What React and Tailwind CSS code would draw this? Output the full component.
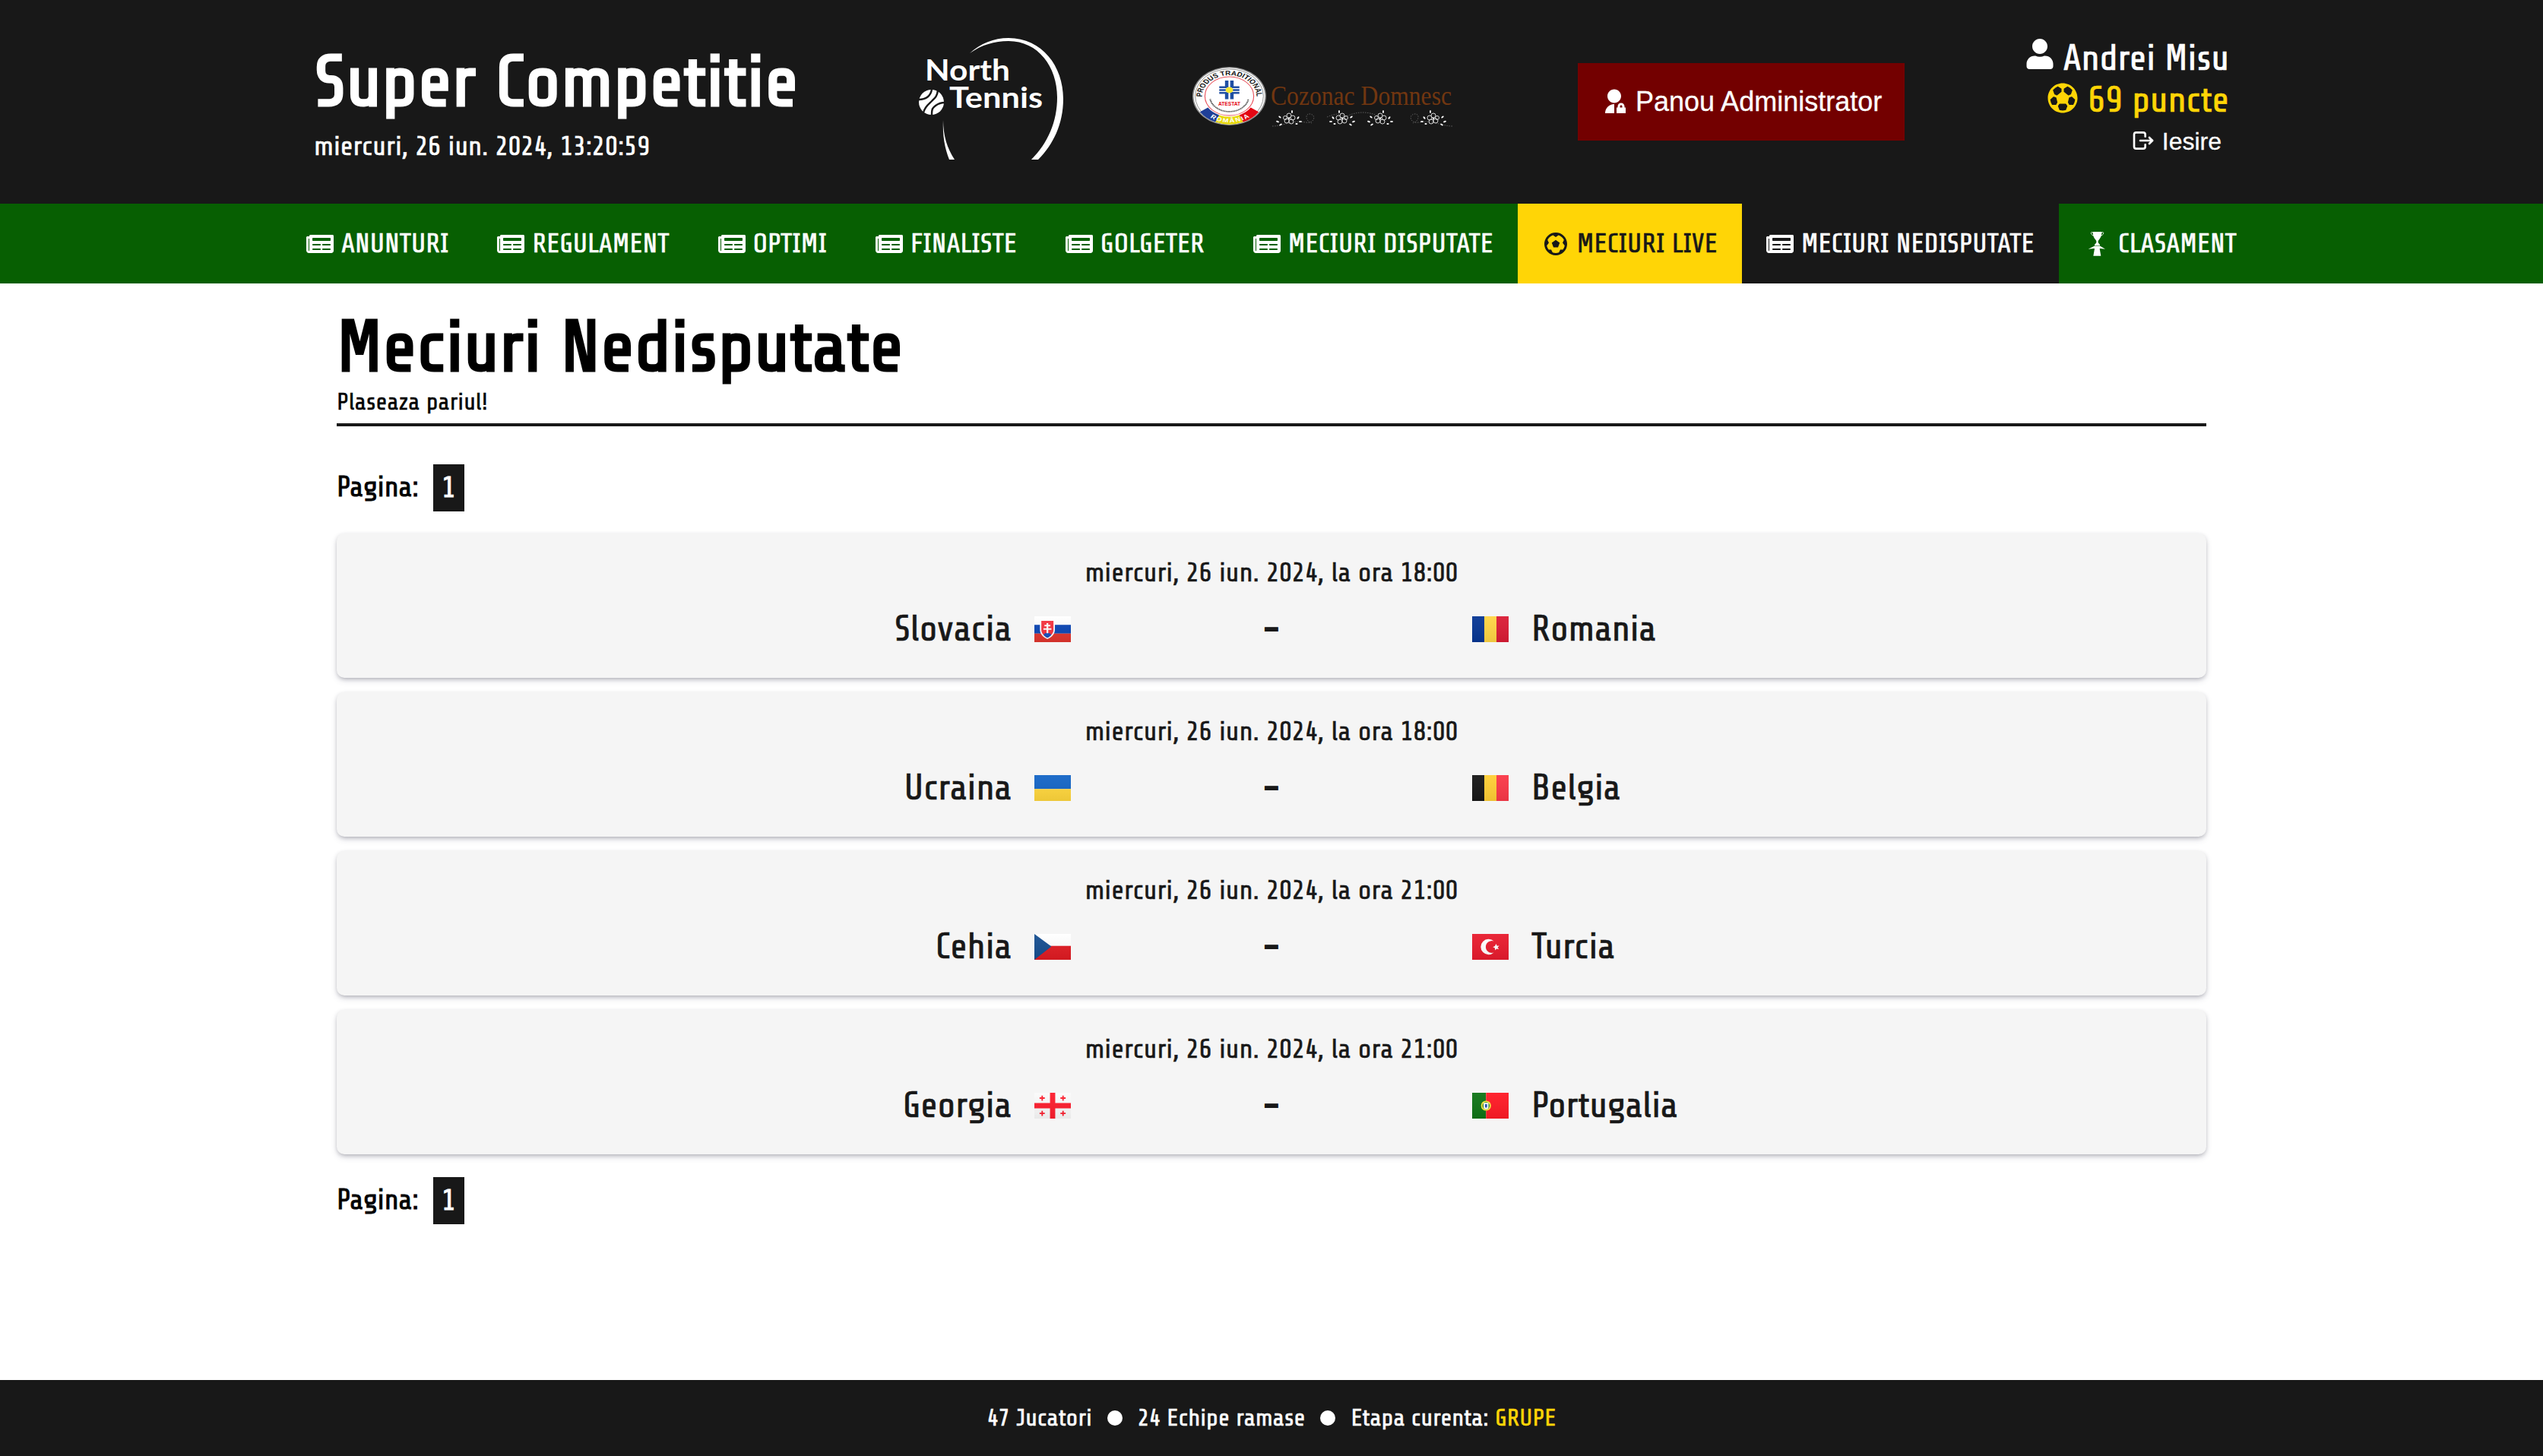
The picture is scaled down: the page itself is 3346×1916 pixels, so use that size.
import { FaNewspaper, FaUser } from "react-icons/fa";
import { BiFootball } from "react-icons/bi";
import { IoFootball } from "react-icons/io5";
import { TbLogout } from "react-icons/tb";
import { RiAdminFill } from "react-icons/ri";

function TrophyFigure() {
  return (
    <svg className="size-9 shrink-0" viewBox="18 22 108 108" fill="currentColor">
      <path d="M55 28h37l-1 4c-1 14-5 22-12 29l-2 4v6l7 8v4H63v-4l7-8v-6l-2-4c-7-7-11-15-12-29z" />
      <path d="M57 34c-3-7-9-5-8 0 1 6 7 8 12 10M90 34c3-7 9-5 8 0-1 6-7 8-12 10" fill="none" stroke="currentColor" strokeWidth="2.5" />
      <path d="M38 96l24-12h23l20 12-20-2-2 1 5 28H58l5-28-3-1z" />
    </svg>
  );
}

function NorthTennisLogo() {
  return (
    <svg className="h-40 w-[200px] shrink-0" viewBox="0 0 200 160" fill="#fff">
      <path d="M71 20C85 7 103 0 122 0c44 0 72 37 72 80 0 33-13 60-33 80h-9c22-22 34-50 34-82 0-40-25-74-64-74-19 0-35 5-51 16z" />
      <path d="M36 108c-1 20 2 37 8 52h7c-10-15-15-32-15-52z" />
      <text x="12" y="56" fontFamily="Lato, sans-serif" fontWeight="700" fontSize="39" textLength="112" lengthAdjust="spacingAndGlyphs">North</text>
      <text x="44" y="91.5" fontFamily="Lato, sans-serif" fontWeight="700" fontSize="38" textLength="123" lengthAdjust="spacingAndGlyphs">Tennis</text>
      <circle cx="20.5" cy="84.5" r="16.5" />
      <g fill="none" stroke="#181818" strokeWidth="2.4">
        <path d="M4 81c9 0 15-4 17-13" />
        <path d="M10 98c2-8 7-11 11-15 4-4 7-6 8-14" />
        <path d="M21 101c0-8 1-9 5-12 4-3 8-4 12-4" />
      </g>
    </svg>
  );
}

function Blossom({ x, flip = 1 }) {
  return (
    <g transform={`translate(${x} 68) scale(${flip} 1)`}>
      <g fill="none" stroke="#d6d6d6" strokeWidth="1">
        <circle cx="0" cy="-4" r="3" />
        <circle cx="5" cy="-1" r="3" />
        <circle cx="3" cy="4" r="3" />
        <circle cx="-3" cy="3" r="3" />
        <circle cx="-5" cy="-1" r="2.5" />
      </g>
      <g fill="#fff">
        <ellipse cx="-12" cy="-2" rx="2" ry="1" transform="rotate(40 -12 -2)" />
        <ellipse cx="-15" cy="4" rx="2" ry="1" transform="rotate(20 -15 4)" />
        <ellipse cx="12" cy="-1" rx="2" ry="1" transform="rotate(-50 12 -1)" />
        <ellipse cx="15" cy="4" rx="2" ry="1" />
        <ellipse cx="-11" cy="8" rx="2" ry="1" transform="rotate(-30 -11 8)" />
        <ellipse cx="10" cy="7" rx="1.6" ry="0.9" />
        <ellipse cx="4" cy="-9" rx="1" ry="2" />
        <circle r="1.2" />
      </g>
    </g>
  );
}

function CozonacLogo() {
  return (
    <svg className="h-20 w-[352px] shrink-0" viewBox="0 0 352 80">
      <g transform="translate(51.5 38.5) scale(1.26 1)">
        <circle r="38.5" fill="#8f8f8f" />
        <circle r="37.2" fill="#fff" />
        <circle r="35.6" fill="none" stroke="#777" strokeWidth="0.7" />
        <circle r="25.5" fill="none" stroke="#e8525c" strokeWidth="0.9" />
        <g fill="none" strokeWidth="10">
          <path d="M-26.5 17.9A32 32 0 0 0-12.5 29.5" stroke="#1f3f97" />
          <path d="M-12.5 29.5A32 32 0 0 0 12.5 29.5" stroke="#e8d90c" />
          <path d="M12.5 29.5A32 32 0 0 0 26.5 17.9" stroke="#e30613" />
        </g>
        <path id="badge-top" d="M-28.5 1A28.5 28.5 0 0 1 28.5 1" fill="none" />
        <path id="badge-bottom" d="M-24 25A34.6 34.6 0 0 0 24 25" fill="none" />
        <text fontFamily="Liberation Sans, sans-serif" fontWeight="700" fontSize="8.6" fill="#111">
          <textPath href="#badge-top" textLength="89" lengthAdjust="spacingAndGlyphs">PRODUS TRADITIONAL</textPath>
        </text>
        <text fontFamily="Liberation Sans, sans-serif" fontWeight="700" fontSize="7.5" fill="#fff">
          <textPath href="#badge-bottom" startOffset="5" textLength="44">ROMÂNIA</textPath>
        </text>
        <path d="M-20 4A20.4 20.4 0 0 0 20 4" fill="none" stroke="#333" strokeWidth="1.6" strokeDasharray="0.9 0.6" />
        <g fill="#1f4fa3">
          <path d="M-4.5-20.5h3.6v9h-3.6zM.9-20.5h3.6v9H.9zM-4.5-5h3.6v9h-3.6zM.9-5h3.6v9H.9z" />
          <path d="M-10.5-13h8v2.600h-8zM-10.500-9.300h8v2.600h-8zM-10.500-5.600h8v2.600h-8zM2.500-13h8v2.600h-8zM2.500-9.300h8v2.600h-8zM2.500-5.600h8v2.600h-8z" />
        </g>
        <circle cy="-8" r="3.9" fill="#f6e72b" />
        <text x="-11.5" y="12.5" fontFamily="Liberation Sans, sans-serif" fontWeight="700" fontSize="7.5" fill="#e30613" textLength="23" lengthAdjust="spacingAndGlyphs">ATESTAT</text>
      </g>
      <text x="106" y="50" fontFamily="Liberation Serif, serif" fontSize="35" fill="#713610" textLength="238" lengthAdjust="spacingAndGlyphs">Cozonac Domnesc</text>
      <g fill="none" stroke="#5c5c5c" strokeWidth="1" strokeDasharray="1.5 1.5">
        <path d="M108 78c16 0 22-8 44-5 12 2 14-10 6-11s-6 10 2 12M180 66c14-6 18-4 24 0M204 66c14-8 32-8 46 0M345 78c-16 0-22-8-44-5-12 2-14-10-6-11s6 10-2 12" />
      </g>
      <Blossom x={130} />
      <Blossom x={200} flip={-1} />
      <Blossom x={250} />
      <Blossom x={320} flip={-1} />
    </svg>
  );
}

const flagArt = {
  sk: (
    <>
      <path fill="#fff" d="M0 0h21v5H0z" />
      <path fill="#0b46b4" d="M0 5h21v5H0z" />
      <path fill="#e1352d" d="M0 10h21v5H0z" />
      <path fill="#fff" d="M3.2 2.1h8.6v5.7c0 2.6-2 4.4-4.3 5.4-2.3-1-4.3-2.8-4.3-5.4z" />
      <path fill="#f5333f" d="M4 2.7h7v5.1c0 2.1-1.6 3.7-3.5 4.6C5.6 11.5 4 9.9 4 7.8z" />
      <path fill="#1650c0" d="M5.3 10.9c.6-1.3 1.3-1 2.2-1.3.9.3 1.6 0 2.2 1.3-.6.7-1.4 1.2-2.2 1.6-.8-.4-1.6-.9-2.2-1.6z" />
      <path fill="#fff" d="M7 4h1v1h1.2v.9H8v1h1.8v.9H8v2H7v-2H5.2v-.9H7v-1H5.8V5H7z" />
    </>
  ),
  ro: (
    <>
      <path fill="#063693" d="M0 0h7v15H0z" />
      <path fill="#ffd544" d="M7 0h7v15H7z" />
      <path fill="#da1c35" d="M14 0h7v15h-7z" />
    </>
  ),
  ua: (
    <>
      <path fill="#1465c6" d="M0 0h21v8H0z" />
      <path fill="#ffd63c" d="M0 8h21v7H0z" />
    </>
  ),
  be: (
    <>
      <path fill="#171717" d="M0 0h7v15H0z" />
      <path fill="#ffce34" d="M7 0h7v15H7z" />
      <path fill="#fa3847" d="M14 0h7v15h-7z" />
    </>
  ),
  cz: (
    <>
      <path fill="#fff" d="M0 0h21v7H0z" />
      <path fill="#e01b22" d="M0 7h21v8H0z" />
      <path fill="#164e90" d="M0 0l9.8 7.3L0 15z" />
    </>
  ),
  tr: (
    <>
      <path fill="#e81b2d" d="M0 0h21v15H0z" />
      <path fill="#fff" d="M12.5 4.2a4.5 4.5 0 1 0 0 6.6 3.5 3.5 0 1 1 0-6.6z" />
      <path fill="#fff" d="M13.8 5.7l.5 1.2 1.3-.1-.9 1 .7 1.1-1.3-.3-.9.9-.1-1.3-1.2-.6 1.2-.5z" />
    </>
  ),
  ge: (
    <>
      <path fill="#fafafa" d="M0 0h21v15H0z" />
      <path fill="#fd1d2d" d="M9 0h3v6h9v3h-9v6H9V9H0V6h9z" />
      <path fill="#fd1d2d" d="M4.100 1.600h.8v1.100H6v.8H4.900v1.100h-.8V3.500H3v-.8h1.100zM16.100 1.600h.8v1.100H18v.8h-1.100v1.100h-.8V3.500H15v-.8h1.100zM4.100 10.500h.8v1.100H6v.8H4.900v1.100h-.8v-1.100H3v-.8h1.100zM16.100 10.500h.8v1.100H18v.8h-1.100v1.100h-.8v-1.100H15v-.8h1.100z" />
    </>
  ),
  pt: (
    <>
      <path fill="#0f7416" d="M0 0h8v15H0z" />
      <path fill="#ff1a25" d="M8 0h13v15H8z" />
      <circle cx="8" cy="7.5" r="2.9" fill="#f9e83c" />
      <circle cx="8" cy="7.5" r="2.1" fill="#3a8a2a" />
      <path fill="#fff" d="M6.6 5.9h2.8v2.3a1.4 1.4 0 0 1-2.8 0z" />
      <path fill="#1b52b5" d="M7.4 6.6h1.2v1.5a.6.6 0 0 1-1.2 0z" />
    </>
  ),
};

function Flag({ code }) {
  return (
    <svg className="h-[34px] w-12 shrink-0" viewBox="0 0 21 15" preserveAspectRatio="none">
      <defs>
        <linearGradient id={`shade-${code}`} x2="0" y2="1">
          <stop offset="0" stopColor="#fff" stopOpacity="0.05" />
          <stop offset="1" stopColor="#000" stopOpacity="0.07" />
        </linearGradient>
      </defs>
      {flagArt[code]}
      <path fill={`url(#shade-${code})`} d="M0 0h21v15H0z" />
    </svg>
  );
}

const navItems = [
  { label: "ANUNTURI", Icon: FaNewspaper },
  { label: "REGULAMENT", Icon: FaNewspaper },
  { label: "OPTIMI", Icon: FaNewspaper },
  { label: "FINALISTE", Icon: FaNewspaper },
  { label: "GOLGETER", Icon: FaNewspaper },
  { label: "MECIURI DISPUTATE", Icon: FaNewspaper },
  { label: "MECIURI LIVE", Icon: BiFootball, tone: "bg-[#ffd506] text-[#181818]" },
  { label: "MECIURI NEDISPUTATE", Icon: FaNewspaper, tone: "bg-[#181818]" },
  { label: "CLASAMENT", Icon: TrophyFigure },
];

const matches = [
  { time: "18:00", home: ["Slovacia", "sk"], away: ["Romania", "ro"] },
  { time: "18:00", home: ["Ucraina", "ua"], away: ["Belgia", "be"] },
  { time: "21:00", home: ["Cehia", "cz"], away: ["Turcia", "tr"] },
  { time: "21:00", home: ["Georgia", "ge"], away: ["Portugalia", "pt"] },
];

function Header() {
  return (
    <header className="flex h-[268px] justify-center bg-[#181818] text-white">
      <div className="flex w-[2520px] items-start">
        <div className="flex w-[792px] flex-col pt-[54px]">
          <h1 className="text-8xl leading-[108px] font-bold">Super Competitie</h1>
          <p className="mt-[11px] text-[36px] leading-10 [-webkit-text-stroke:0.5px]">miercuri, 26 iun. 2024, 13:20:59</p>
        </div>
        <div className="mt-[50px] w-[361px]">
          <NorthTennisLogo />
        </div>
        <div className="mt-[88px] w-[510px]">
          <CozonacLogo />
        </div>
        <button className="mt-[83px] flex h-[102px] w-[430px] items-center gap-2.5 bg-[#730000] px-[30px] font-['Liberation_Sans',Arial,sans-serif] text-[36px] whitespace-nowrap [-webkit-text-stroke:0.3px]">
          <RiAdminFill className="size-9 shrink-0" />
          Panou Administrator
        </button>
        <div className="mt-[50px] ml-auto flex flex-col items-end">
          <div className="flex h-[55px] gap-2.5 text-5xl leading-[54px] [-webkit-text-stroke:0.7px]">
            <FaUser className="mt-px size-10" />
            <span>Andrei Misu</span>
          </div>
          <div className="flex h-[54px] gap-2.5 text-5xl leading-[54px] text-[#ffd506] [-webkit-text-stroke:0.7px]">
            <IoFootball className="size-12" />
            <span>69 puncte</span>
          </div>
          <button className="mt-[9px] mr-2.5 flex items-start gap-[9px] font-['Liberation_Sans',Arial,sans-serif] text-[32px] leading-9 [-webkit-text-stroke:0.3px]">
            <TbLogout className="mt-px size-8" />
            Iesire
          </button>
        </div>
      </div>
    </header>
  );
}

function Nav() {
  return (
    <nav className="flex h-[105px] justify-center bg-[#075f02] text-[36px] text-white [-webkit-text-stroke:0.6px]">
      {navItems.map(({ label, Icon, tone = "" }) => (
        <a key={label} className={`flex items-center gap-2.5 px-8 whitespace-nowrap ${tone}`}>
          <Icon className="size-9 shrink-0" />
          <span>{label}</span>
        </a>
      ))}
    </nav>
  );
}

function Pagination() {
  return (
    <div className="flex h-[62px] items-center gap-[19px] pb-px text-[37.6px] [-webkit-text-stroke:0.8px]">
      <span>Pagina:</span>
      <span className="-mb-px flex h-[62px] w-[41px] items-center justify-center bg-[#181818] text-white">1</span>
    </div>
  );
}

function MatchCard({ time, home, away }) {
  return (
    <article className="flex h-[190px] flex-col rounded-[10px] bg-[#f5f5f5] pt-8 text-[#181818] shadow-[0_4px_10px_-2px_rgba(50,50,93,0.25),0_2px_6px_-2px_rgba(0,0,0,0.3)]">
      <p className="text-center text-[36px] leading-10 [-webkit-text-stroke:0.5px]">miercuri, 26 iun. 2024, la ora {time}</p>
      <div className="mt-[27px] grid grid-cols-[1fr_528px_1fr] items-center text-5xl leading-[54px] [-webkit-text-stroke:0.7px]">
        <div className="flex items-center justify-end gap-[30px]">
          <span>{home[0]}</span>
          <Flag code={home[1]} />
        </div>
        <span className="text-center font-bold">-</span>
        <div className="flex items-center gap-[30px]">
          <Flag code={away[1]} />
          <span>{away[0]}</span>
        </div>
      </div>
    </article>
  );
}

function Footer() {
  return (
    <footer className="flex h-[100px] items-center justify-center gap-5 bg-[#181818] text-[32px] text-white [-webkit-text-stroke:0.5px]">
      <span>47 Jucatori</span>
      <span className="size-5 rounded-full bg-white" />
      <span>24 Echipe ramase</span>
      <span className="size-5 rounded-full bg-white" />
      <span>
        Etapa curenta: <span className="text-[#ffd506]">GRUPE</span>
      </span>
    </footer>
  );
}

export default function App() {
  return (
    <div className="flex h-[1916px] flex-col bg-white font-['Share_Tech','Roboto_Condensed',Roboto,sans-serif] text-black">
      <Header />
      <Nav />
      <main className="mx-auto flex w-[2460px] grow flex-col">
        <div className="border-b-4 border-[#181818] pt-[30px] pb-2.5">
          <h2 className="text-8xl leading-[108px] font-bold">Meciuri Nedisputate</h2>
          <p className="text-[32px] leading-9 [-webkit-text-stroke:0.4px]">Plaseaza pariul!</p>
        </div>
        <div className="mt-[50px]">
          <Pagination />
        </div>
        <div className="mt-[29px] mb-[30px] flex flex-col gap-[19px]">
          {matches.map((match) => (
            <MatchCard key={match.home[0]} {...match} />
          ))}
        </div>
        <Pagination />
      </main>
      <Footer />
    </div>
  );
}
